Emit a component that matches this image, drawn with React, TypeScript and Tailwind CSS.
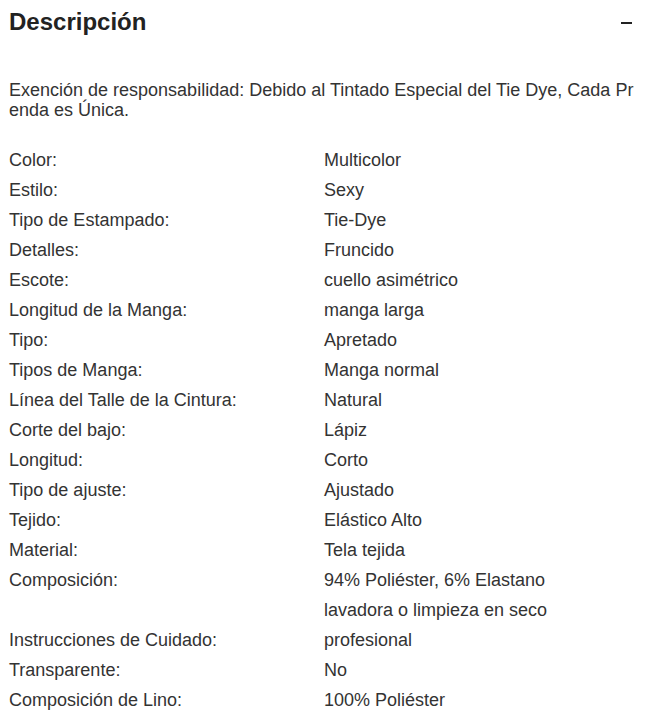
const rows: [string, string][] = [
  ["Color:", "Multicolor"],
  ["Estilo:", "Sexy"],
  ["Tipo de Estampado:", "Tie-Dye"],
  ["Detalles:", "Fruncido"],
  ["Escote:", "cuello asimétrico"],
  ["Longitud de la Manga:", "manga larga"],
  ["Tipo:", "Apretado"],
  ["Tipos de Manga:", "Manga normal"],
  ["Línea del Talle de la Cintura:", "Natural"],
  ["Corte del bajo:", "Lápiz"],
  ["Longitud:", "Corto"],
  ["Tipo de ajuste:", "Ajustado"],
  ["Tejido:", "Elástico Alto"],
  ["Material:", "Tela tejida"],
  ["Composición:", "94% Poliéster, 6% Elastano"],
  ["", "lavadora o limpieza en seco"],
  ["Instrucciones de Cuidado:", "profesional"],
  ["Transparente:", "No"],
  ["Composición de Lino:", "100% Poliéster"],
]

export default function App() {
  return (
    <div className="min-h-screen bg-white px-[9px] text-[#222] font-['Liberation_Sans',Arial,sans-serif]">
      {/* header */}
      <div className="flex h-[44px] items-center justify-between">
        <h2 className="text-[24px] font-bold">Descripción</h2>
        <span className="mr-[11px] mt-[1px] block h-[2px] w-[11px] bg-[#222]" />
      </div>

      <p className="mt-[36px] w-[628px] break-all text-[18px] leading-[20px] text-[#333]">
        Exención de responsabilidad: Debido al Tintado Especial del Tie Dye, Cada Prenda es Única.
      </p>

      <div className="mt-[25px] flex flex-col text-[18px] text-[#333]">
        {rows.map(([label, value], i) => (
          <div key={i} className="flex h-[30px] items-center">
            <div className="w-[315px]">{label}</div>
            <div>{value}</div>
          </div>
        ))}
      </div>
    </div>
  )
}
